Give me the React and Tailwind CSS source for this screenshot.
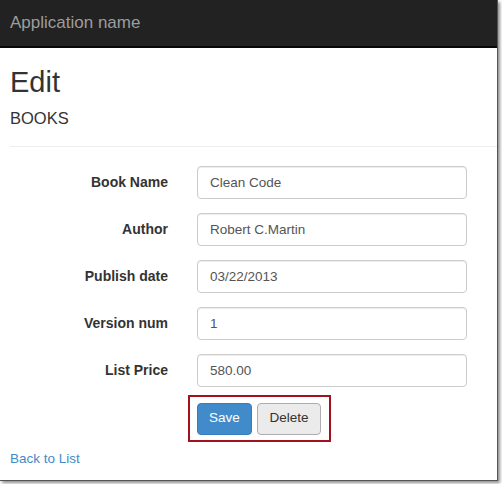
export default function App() {
  const fields = [
    { label: "Book Name", value: "Clean Code" },
    { label: "Author", value: "Robert C.Martin" },
    { label: "Publish date", value: "03/22/2013" },
    { label: "Version num", value: "1" },
    { label: "List Price", value: "580.00" },
  ];

  return (
    <div className="w-[502px] h-[484px] bg-white font-['Liberation_Sans',Arial,sans-serif]">
      {/* Window frame with drop shadow */}
      <div className="w-[498px] h-[481px] bg-white border-r border-b border-[#555] shadow-[2px_2px_3px_rgba(0,0,0,0.45)] overflow-hidden">
        {/* Navbar */}
        <div className="h-[48px] bg-[#222] border-b-2 border-[#080808] flex items-center px-[10px]">
          <span className="text-[17px] text-[#9d9d9d]">Application name</span>
        </div>

        <div className="pl-[10px]">
          <h2 className="mt-[18px] text-[29px] leading-[33px] text-[#333]">Edit</h2>
          <h4 className="mt-[10px] text-[16.5px] leading-[18px] text-[#333]">BOOKS</h4>
          <hr className="mt-[19px] border-t border-[#eee]" />

          {/* Form */}
          <div className="mt-[19px] flex flex-col gap-[14px]">
            {fields.map((f) => (
              <div key={f.label} className="flex items-center">
                <label className="w-[158px] text-right text-[14px] font-bold text-[#333]">
                  {f.label}
                </label>
                <input
                  readOnly
                  value={f.value}
                  className="ml-[29px] w-[270px] h-[33px] px-[12px] text-[13.5px] text-[#555] bg-white border border-[#ccc] rounded-[4px] shadow-[inset_0_1px_1px_rgba(0,0,0,0.075)] outline-none"
                />
              </div>
            ))}
          </div>

          {/* Buttons */}
          <div className="mt-[8px] ml-[178px] w-[143px] h-[47px] border-2 border-[#a0121e] flex items-center gap-[5px] pl-[7px]">
            <button className="w-[55px] h-[32px] rounded-[4px] bg-[#428bca] border border-[#357ebd] text-white text-[13.5px]">
              Save
            </button>
            <button className="w-[64px] h-[32px] rounded-[4px] bg-[#ebebeb] border border-[#adadad] text-[#333] text-[13.5px]">
              Delete
            </button>
          </div>

          <a href="#" className="block mt-[7px] text-[13.5px] leading-[20px] text-[#428bca]">
            Back to List
          </a>
        </div>
      </div>
    </div>
  );
}
